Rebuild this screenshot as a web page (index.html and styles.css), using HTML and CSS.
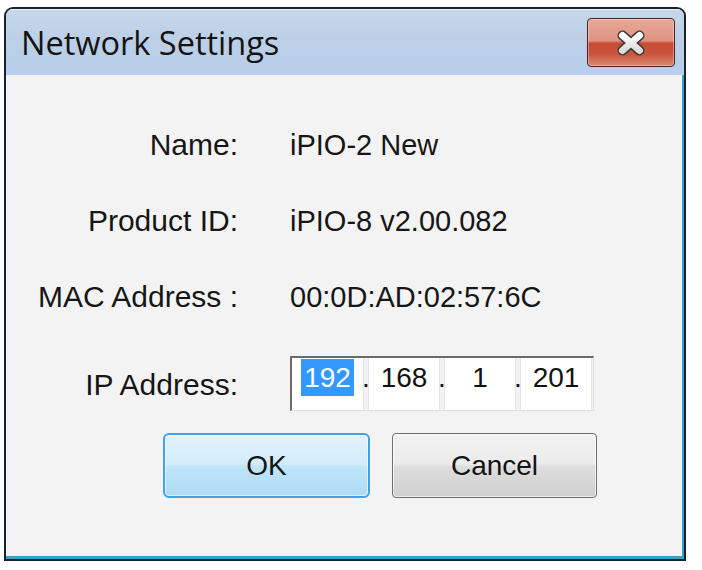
FILE: index.html
```html
<!DOCTYPE html>
<html>
<head>
<meta charset="utf-8">
<link rel="stylesheet" href="styles.css">
</head>
<body>
<div class="window">
  <div class="titlebar">
    <span class="title">Network Settings</span>
    <div class="close">
      <svg width="30" height="26" viewBox="0 0 30 26">
        <defs>
          <linearGradient id="xg" x1="0" y1="0" x2="0" y2="1">
            <stop offset="0" stop-color="#ffffff"/>
            <stop offset="1" stop-color="#dcdcdc"/>
          </linearGradient>
        </defs>
        <path d="M6.5 5.5 L23.5 20.5 M23.5 5.5 L6.5 20.5" stroke="#3b3b3b" stroke-width="10" stroke-linecap="round" fill="none"/>
        <path d="M6.5 5.5 L23.5 20.5 M23.5 5.5 L6.5 20.5" stroke="url(#xg)" stroke-width="7" stroke-linecap="round" fill="none"/>
      </svg>
    </div>
  </div>
  <div class="content">
    <div class="form">
      <div class="label">Name:</div>
      <div class="value">iPIO-2 New</div>
      <div class="label">Product ID:</div>
      <div class="value">iPIO-8 v2.00.082</div>
      <div class="label">MAC Address :</div>
      <div class="value">00:0D:AD:02:57:6C</div>
      <div class="label label-ip">IP Address:</div>
      <div class="ipbox">
        <div class="seg"><span class="sel">192</span></div>
        <div class="dot">.</div>
        <div class="seg">168</div>
        <div class="dot">.</div>
        <div class="seg">1</div>
        <div class="dot">.</div>
        <div class="seg">201</div>
      </div>
    </div>
    <div class="buttons">
      <button class="btn btn-ok">OK</button>
      <button class="btn btn-cancel">Cancel</button>
    </div>
  </div>
</div>
</body>
</html>
```
FILE: styles.css
```css
html, body {
  margin: 0;
  padding: 0;
  background: #ffffff;
}

.window {
  margin: 7px 0 0 4px;
  width: 682px;
  height: 554px;
  box-sizing: border-box;
  border: 2px solid #18222e;
  border-radius: 9px 9px 0 0;
  overflow: hidden;
  display: flex;
  flex-direction: column;
  background: #f3f3f3;
}

.titlebar {
  height: 66px;
  flex: none;
  display: flex;
  justify-content: space-between;
  align-items: flex-start;
  padding: 0 9px 0 15px;
  background: linear-gradient(#c6d7ea 0%, #bccfe6 50%, #b7cfeb 100%);
  box-shadow: inset 0 1px 0 rgba(255,255,255,0.6);
}

.title {
  margin-top: 17px;
  font-family: "Open Sans", "Noto Sans", sans-serif;
  font-size: 32.5px;
  line-height: 34px;
  color: #141414;
}

.close {
  margin-top: 9px;
  width: 88px;
  height: 49px;
  box-sizing: border-box;
  border: 1px solid #4a221b;
  border-radius: 4px;
  background: linear-gradient(#e9a898 0%, #df9281 46%, #c74b32 52%, #c9553d 75%, #dc8a75 100%);
  box-shadow: inset 0 0 0 1px rgba(255,255,255,0.35);
  display: flex;
  align-items: center;
  justify-content: center;
}

.close svg {
  display: block;
}

.content {
  flex: 1;
  padding-top: 53px;
  box-shadow: inset -2px -3px 0 #35a3c6;
  font-family: "Liberation Sans", Arial, sans-serif;
  color: #161616;
}

.form {
  display: grid;
  grid-template-columns: 232px auto;
  grid-template-rows: 34px 34px 34px 55px;
  column-gap: 52px;
  row-gap: 42px;
}

.label {
  text-align: right;
  font-size: 30px;
  line-height: 34px;
}

.label-ip {
  align-self: start;
  margin-top: 12px;
}

.value {
  font-size: 29px;
  line-height: 34px;
}

.ipbox {
  width: 304px;
  height: 55px;
  box-sizing: border-box;
  border-top: 2px solid #6a6a6a;
  border-left: 2px solid #6a6a6a;
  border-right: 1px solid #dedede;
  border-bottom: 1px solid #dedede;
  background: #f2f2f2;
  display: flex;
  font-size: 28px;
  line-height: 37px;
  color: #111;
}

.seg {
  width: 72px;
  box-sizing: border-box;
  background: #ffffff;
  border-left: 1px solid #e6e6e6;
  border-right: 1px solid #e6e6e6;
  padding-top: 1px;
  text-align: center;
}

.seg:first-child {
  border-left: none;
}

.dot {
  width: 4px;
  padding-top: 1px;
  display: flex;
  justify-content: center;
  overflow: visible;
}

.sel {
  display: inline-block;
  background: #3399ff;
  color: #ffffff;
  padding: 0 3px;
}

.buttons {
  display: flex;
  gap: 22px;
  margin-top: 22px;
  padding-left: 157px;
}

.btn {
  height: 65px;
  box-sizing: border-box;
  font-family: "Liberation Sans", Arial, sans-serif;
  font-size: 28px;
  color: #141414;
  padding: 0;
  display: flex;
  align-items: center;
  justify-content: center;
}

.btn-ok {
  width: 207px;
  border: 2px solid #3fa2e4;
  border-radius: 6px;
  background: linear-gradient(#e1f2fc 0%, #d2ecfb 48%, #bfe5f9 52%, #aedbf5 100%);
  box-shadow: inset 0 0 0 1px rgba(255,255,255,0.6);
}

.btn-cancel {
  width: 205px;
  border: 1px solid #707070;
  border-radius: 4px;
  background: linear-gradient(#f2f2f2 0%, #ebebeb 48%, #dddddd 52%, #d0d0d0 100%);
  box-shadow: inset 0 0 0 1px rgba(255,255,255,0.6);
}
```
